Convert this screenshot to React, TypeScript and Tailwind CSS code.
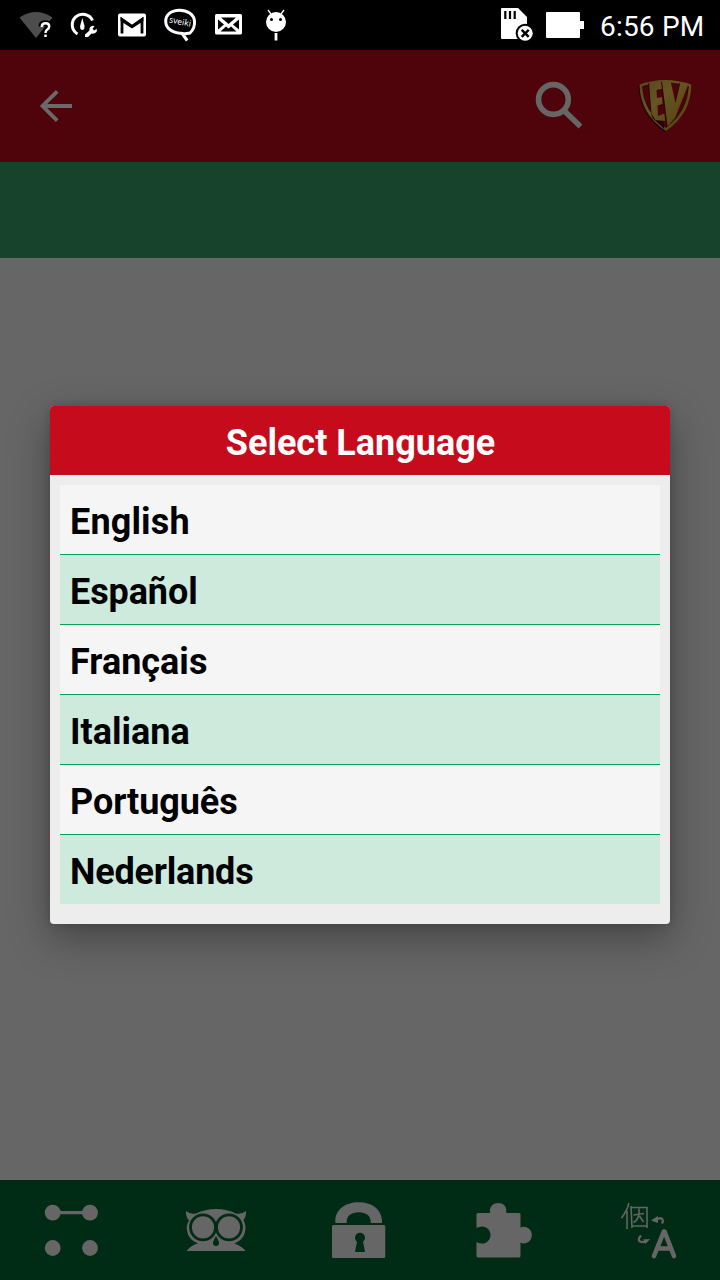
import React from "react";

const languages = [
  { name: "English", tracking: "tracking-[0.15px]" },
  { name: "Español", tracking: "tracking-[-0.1px]" },
  { name: "Français", tracking: "tracking-normal" },
  { name: "Italiana", tracking: "tracking-normal" },
  { name: "Português", tracking: "tracking-[-0.08px]" },
  { name: "Nederlands", tracking: "tracking-[-0.2px]" },
];

function StatusBar() {
  return (
    <header className="flex h-[50px] shrink-0 items-start bg-black pl-[18px] text-white">
      <svg className="h-[50px] w-[36px]" viewBox="18 0 36 50">
        <path d="M19.5 17.5Q36 6.500 52.500 17.500L36 38Z" fill="#4d4d4d" />
        <path d="M41.500 26.500Q41.500 23.300 45.300 23.300Q49.200 23.300 49.200 26.500Q49.200 28.300 47.200 29.600Q45.500 30.700 45.500 33M45.500 34.500V37" fill="none" stroke="#000" strokeWidth="6" />
        <path d="M41.800 27Q41.800 23.300 45.500 23.300Q49.200 23.300 49.200 26.300Q49.200 28.200 47.300 29.500Q45.500 30.700 45.500 33M45.500 34.600V37" fill="none" stroke="#fff" strokeWidth="2.500" />
      </svg>
      <svg className="ml-[14px] h-[50px] w-[32px]" viewBox="68 0 32 50">
        <path d="M77.500 34A10.600 10.600 0 1 1 92.500 20.500" fill="none" stroke="#fff" strokeWidth="3" />
        <path d="M82.300 18L84.500 26Q84.600 30 82.300 30Q80 30 80.100 26Z" fill="#fff" />
        <path d="M85 37V34.500L89.500 30.500Q88.800 26.600 93 25.800L94.500 26.300L92.500 28.800L94.200 30.600L96.700 28.800Q98 34 91.500 33.600L88 37Z" fill="#fff" />
      </svg>
      <svg className="ml-[16px] h-[50px] w-[32px]" viewBox="116 0 32 50">
        <rect x="118" y="13.500" width="28" height="23" rx="2" fill="#fff" />
        <path d="M122 33.500V19.500L132 26.300L142 19.500V33.500" fill="none" stroke="#000" strokeWidth="2.800" />
        <path d="M120.600 17L132 25L143.400 17V21L132 28.500L120.600 21Z" fill="#000" />
      </svg>
      <svg className="ml-[14px] h-[50px] w-[36px]" viewBox="162 0 36 50">
        <path d="M182.500 34L187.200 40.500M183.500 34L190 33Q195.200 28 194.500 21C193.800 14 187 10.200 179.500 10.200C171 10.200 165.500 15 165.700 21.500C166 29 173 33.500 183.500 33.500" fill="none" stroke="#fff" strokeWidth="3" />
        <text x="180" y="24.500" textAnchor="middle" transform="rotate(12 180 22)" fill="#fff" fontSize="8.500" fontFamily="Noto Sans, sans-serif">sveiki</text>
      </svg>
      <svg className="ml-[14px] h-[50px] w-[32px]" viewBox="212 0 32 50">
        <rect x="215" y="14" width="27" height="20.500" rx="1.500" fill="#fff" />
        <path d="M221 17.500H236L228.500 24ZM218 19.500L224 24.500L218 29.500ZM239 19.500L233 24.500L239 29.500ZM220.500 31.500L226 26.500L228.500 28.500L231 26.500L236.500 31.500Z" fill="#000" />
      </svg>
      <svg className="ml-[18px] h-[50px] w-[28px]" viewBox="262 0 28 50">
        <circle cx="276" cy="22" r="10" fill="#fff" />
        <path d="M268 10L271 14M284 10L281 14" stroke="#fff" strokeWidth="1.300" />
        <path d="M276 33V40.500" stroke="#fff" strokeWidth="2.800" />
        <circle cx="271.500" cy="19.500" r="1.500" />
        <circle cx="280.500" cy="19.500" r="1.500" />
      </svg>
      <svg className="ml-[208px] h-[50px] w-[38px]" viewBox="498 0 38 50">
        <path d="M501 9Q501 8 502 8H518L527 17V39H502Q501 39 501 38Z" fill="#fff" />
        <path d="M505.300 11V19M510 11V19M514.700 11V19" stroke="#000" strokeWidth="2.200" />
        <circle cx="525.200" cy="33.300" r="9.500" />
        <circle cx="525.200" cy="33.300" r="7.500" fill="#fff" />
        <path d="M521.700 29.800L528.700 36.800M528.700 29.800L521.700 36.800" stroke="#000" strokeWidth="2.400" />
      </svg>
      <svg className="ml-[8px] h-[50px] w-[42px]" viewBox="544 0 42 50">
        <path d="M547 12H579Q580 12 580 13V21H584V29H580V37Q580 38 579 38H547Q546 38 546 37V13Q546 12 547 12Z" fill="#fff" />
      </svg>
      <span className="ml-[14px] whitespace-nowrap text-[28px] leading-[53px] tracking-[0.2px]">6:56 PM</span>
    </header>
  );
}

function AppBar() {
  return (
    <div className="flex h-[112px] shrink-0 items-center justify-between bg-[#4f040b] px-[28px]">
      <svg className="h-[56px] w-[56px]" viewBox="28 78 56 56" fill="none" stroke="#6a6a6a" strokeWidth="3.800">
        <path d="M72 106H43M57.200 91.300L42.500 106L57.200 120.700" />
      </svg>
      <div className="flex gap-[48px]">
        <svg className="h-[60px] w-[56px]" viewBox="532 76 56 60" fill="none" stroke="#666">
          <circle cx="553.400" cy="99.500" r="14.900" strokeWidth="5.600" />
          <path d="M564.500 111L580.500 126.500" strokeWidth="5.500" />
        </svg>
        <svg className="h-[60px] w-[56px]" viewBox="636 76 56 60">
          <defs>
            <linearGradient id="gold" gradientUnits="userSpaceOnUse" x1="640" y1="80" x2="685" y2="130">
              <stop stopColor="#574719" />
              <stop offset=".4" stopColor="#665423" />
              <stop offset="1" stopColor="#54420f" />
            </linearGradient>
          </defs>
          <path d="M638.500 85.500Q664 76 690.500 85.500Q690 115 665 132.300Q639 115 638.500 85.500Z" fill="#250308" />
          <path d="M639.500 84.500Q665 75.500 691.300 84.500Q691 114 666 131Q640 114 639.500 84.500Z" fill="url(#gold)" />
          <path d="M642.500 86.500Q665 79 688.500 86.500Q687 112 666 127.500Q643.500 111 642.500 86.500Z" fill="#4a040a" stroke="#2b0709" strokeWidth=".7" />
          <path d="M649 82.500L663.500 80.500L664 88.500L656.500 90L657 98L662 97L662.500 104L657.500 105.500L658 116L664.500 113.500L665 128L653 117L651 109Z" fill="#260408" transform="translate(-.8 .8)" />
          <path d="M649 82.500L663.500 80.500L664 88.500L656.500 90L657 98L662 97L662.500 104L657.500 105.500L658 116L664.500 113.500L665 121L655.500 120L651.500 114Z" fill="url(#gold)" />
          <path d="M662 81H670.500L675.500 103L680.500 82L688.500 84L675 118L667.500 126.500Z" fill="#260408" transform="translate(-.9 .8)" />
          <path d="M662 81H670.500L675.500 103L680.500 82L688.500 84L675 118L667.500 126.500Z" fill="url(#gold)" />
        </svg>
      </div>
    </div>
  );
}

function BottomBar() {
  return (
    <nav className="grid h-[100px] shrink-0 grid-cols-5 bg-[#002c16]">
      <svg className="h-full w-full" viewBox="0 1180 144 100" fill="#666">
        <circle cx="52.700" cy="1212.700" r="7.900" />
        <circle cx="90" cy="1212.700" r="7.900" />
        <circle cx="52.700" cy="1248" r="7.900" />
        <circle cx="90" cy="1248" r="7.900" />
        <path d="M52 1211H90V1214.300H52Z" />
      </svg>
      <svg className="h-full w-full" viewBox="144 1180 144 100">
        <path fill="#666" d="M186 1211Q190 1214.500 196 1213.500Q205 1209 216 1209Q227 1209 236 1213.500Q242 1214.500 246 1211Q246.500 1216 243.500 1220Q246.500 1226 245 1232Q243 1240 234.500 1243.500Q242 1246 245.500 1251H186.500Q191 1245 198 1243.500Q189 1240 187.300 1232Q185.500 1226 189 1220.500Q185.500 1217 186 1211Z" />
        <g fill="#666" stroke="#002c16" strokeWidth="2.800">
          <circle cx="203" cy="1227.300" r="12.500" />
          <circle cx="229" cy="1227.300" r="12.500" />
        </g>
        <path d="M216 1236Q219 1241 219 1243Q219 1246 216 1246Q213 1246 213 1243Q213 1241 216 1236Z" fill="#002c16" />
      </svg>
      <svg className="h-full w-full" viewBox="288 1180 144 100">
        <path fill="#666" d="M335.300 1223V1221C335.300 1210 345 1202.300 358.700 1202.300S382 1210 382 1221V1223H370.700V1221.500C370.700 1216 366 1212.300 358.700 1212.300S346.700 1216 346.700 1221.500V1223Z" />
        <rect x="332" y="1225" width="53.300" height="33" rx="1.500" fill="#666" />
        <circle cx="360" cy="1237.700" r="5" fill="#002c16" />
        <path d="M357.500 1239H362.500L365 1252H355Z" fill="#002c16" />
      </svg>
      <svg className="h-full w-full" viewBox="432 1180 144 100" fill="#666">
        <path d="M478 1213H490V1210.500C490 1206 493.500 1203 498.300 1203S506.300 1206 506.300 1210.500V1213H519Q520.500 1213 520.500 1214.500V1227.500Q522 1226.700 523.500 1226.700C528.500 1226.700 531.800 1230.300 531.800 1235S528.500 1243.500 523.500 1243.500Q522 1243.500 520.500 1242.500V1256Q520.500 1257.500 519 1257.500H478Q476.500 1257.500 476.500 1256V1242Q479 1243.600 482 1243.600C487 1243.600 490.500 1239.500 490.500 1235S487 1226.500 482 1226.500Q479 1226.500 476.500 1228V1214.500Q476.500 1213 478 1213Z" />
      </svg>
      <svg className="h-full w-full" viewBox="576 1180 144 100">
        <g fill="none" stroke="#626562">
          <path d="M629 1203Q627 1211 621.500 1218M627 1211V1229M631 1206L632 1228M631.500 1207.500H647V1228M632.500 1226H647M633.500 1215L644 1213.500M639 1208.500V1214Q638 1220 633.500 1222.500M639.500 1216L643.500 1222" strokeWidth="1.600" />
          <path d="M654 1220L660 1218.200Q664.500 1219 662 1223.500M641 1235.500Q635.500 1242 643.500 1242.200L647 1240.500" strokeWidth="2.200" />
        </g>
        <path d="M651 1220.500L658 1216L658 1223ZM650 1239L643 1239.500L645.500 1244Z" fill="#666" />
        <path d="M654 1256L663.800 1231.500H664.500L674 1256M658 1248.500H670" fill="none" stroke="#666" strokeWidth="4.600" strokeLinecap="round" strokeLinejoin="round" />
      </svg>
    </nav>
  );
}

export default function App() {
  return (
    <div className="relative flex h-[1280px] w-[720px] flex-col overflow-hidden bg-[#666] font-[Roboto,sans-serif]">
      <StatusBar />
      <AppBar />
      <div className="h-[96px] shrink-0 bg-[#17422c]" />
      <main className="flex-1 bg-[#666]" />
      <BottomBar />
      <section role="dialog" className="absolute left-[50px] top-[406px] flex h-[518px] w-[620px] flex-col rounded-[4px] bg-[#ededed] shadow-[0_14px_40px_rgba(0,0,0,0.34),0_0_8px_rgba(0,0,0,0.16)]">
        <h1 className="h-[69px] rounded-t-[4px] bg-[#c60b1c] pl-px text-center text-[36px] font-bold leading-[75px] text-white">Select Language</h1>
        <ul className="mx-[10px] mt-[10px] text-[36px] font-bold text-black">
          {languages.map(({ name, tracking }) => (
            <li key={name} className="h-[70px] border-b border-[#00a651] bg-[#f5f5f5] pl-[10px] leading-[74px] even:bg-[#ceeadc] last:h-[69px] last:border-b-0">
              <span className={tracking}>{name}</span>
            </li>
          ))}
        </ul>
      </section>
    </div>
  );
}
